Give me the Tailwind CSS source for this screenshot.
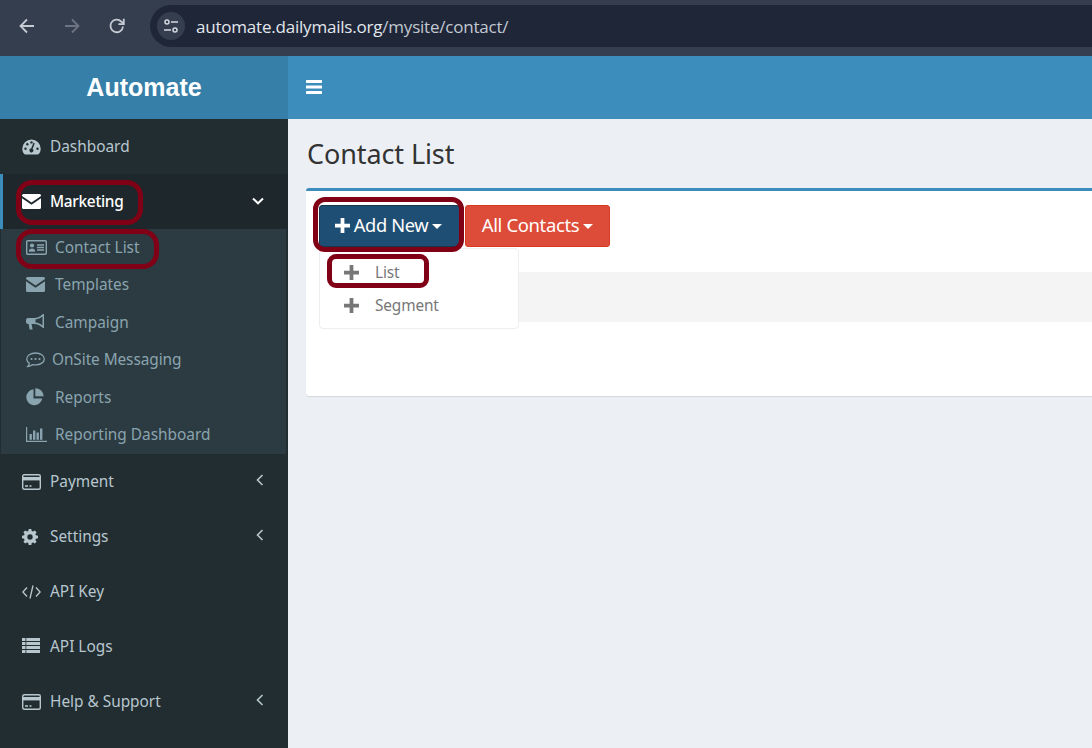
<!DOCTYPE html>
<html><head><meta charset="utf-8"><script src="https://cdn.jsdelivr.net/npm/@tailwindcss/browser@4"></script></head>
<body class="relative w-[1092px] h-[748px] overflow-hidden bg-[#ecf0f5] font-['Noto_Sans',sans-serif]">
<!-- browser bar -->
<div class="h-[56px] bg-[#353e4e] flex items-start pt-[5px]">
  <div class="w-[150px] h-[42px] flex shrink-0 items-center pl-[18px] gap-[27px]">
    <svg class="w-[18px] h-[18px]" viewBox="0 0 18 18" fill="none" stroke="#c5cad3" stroke-width="1.8"><path d="M16 9H2.500M9 2.500 2.500 9 9 15.500"/></svg>
    <svg class="w-[18px] h-[18px]" viewBox="0 0 18 18" fill="none" stroke="#6d7482" stroke-width="1.8"><path d="M2 9h13.500M9 2.500 15.500 9 9 15.500"/></svg>
    <svg class="w-[18px] h-[18px]" viewBox="0 0 18 18" fill="none" stroke="#c5cad3" stroke-width="1.8"><path d="M15 9.500A6.300 6.300 0 1 1 13.200 4.500L15.500 6.500"/><path d="M15.800 1.800v5.400h-5.400" /></svg>
  </div>
  <div class="flex-1 h-[42px] rounded-l-[21px] bg-[#1e2638] flex items-center pl-[7px]">
    <div class="w-[28px] h-[28px] rounded-full bg-[#353e4e] flex items-center justify-center">
      <svg class="w-[16px] h-[16px]" viewBox="0 0 16 16" fill="none" stroke="#d5d9e0" stroke-width="1.5"><circle cx="4" cy="4" r="2"/><path d="M8 4h7M1 12h7"/><circle cx="12" cy="12" r="2"/></svg>
    </div>
    <span class="ml-[11px] mt-[2px] text-[17px] text-[#e3e6ec] font-['Open_Sans',sans-serif] tracking-[-0.21px]">automate.dailymails.org<span class="text-[#c3c8d1]">/mysite/contact/</span></span>
  </div>
</div>
<!-- app header -->
<div class="h-[63px] flex bg-[#3c8dbc]">
  <div class="w-[288px] bg-[#367fa9] flex items-center justify-center text-white font-bold text-[25px] font-['Liberation_Sans',sans-serif]">Automate</div>
  <div class="pl-[18px] pb-[2px] flex items-center">
    <svg class="w-[16px] h-[14px]" viewBox="0 0 16 14" fill="#fff"><rect width="16" height="3" rx=".6"/><rect y="5.500" width="16" height="3" rx=".6"/><rect y="11" width="16" height="3" rx=".6"/></svg>
  </div>
</div>
<div class="flex h-[629px]">
  <!-- sidebar -->
  <aside class="w-[288px] shrink-0 bg-[#222d32] text-[#b8c7ce] text-[15.4px] tracking-[-0.01px]">
    <div class="h-[55px] pl-[22px] flex items-center gap-[9px]">
      <svg class="w-[19px] h-[16px]" viewBox="0 0 19 16" fill="#b8c7ce"><path d="M9.500 0.500A9.200 9.200 0 0 0 .3 9.700c0 2.200.7 4 2 5.300.2.2.5.4.8.4h12.800c.3 0 .6-.2.8-.4 1.300-1.300 2-3.100 2-5.300A9.200 9.200 0 0 0 9.500.5z"/><g fill="#222d32"><circle cx="3.500" cy="9.700" r="1.200"/><circle cx="5.300" cy="5.200" r="1.200"/><circle cx="9.500" cy="3.400" r="1.200"/><circle cx="15.500" cy="9.700" r="1.200"/><path d="M12.800 4.200 10.600 10a1.900 1.900 0 1 1-1.500-.4l2.400-5.900z"/></g></svg>
      <span>Dashboard</span>
    </div>
    <div class="h-[55px] pl-[19px] pr-[24px] flex items-center gap-[9px] bg-[#1e282c] border-l-[3px] border-[#3c8dbc] text-white font-medium tracking-[-0.3px]">
      <svg class="w-[19px] h-[15px] shrink-0" viewBox="0 0 19 15" fill="#fff"><path d="M0 1.500A1.500 1.500 0 0 1 1.500 0h16A1.500 1.500 0 0 1 19 1.500v.6L9.500 8.600 0 2.100z"/><path d="M0 4.200 9.500 10.700 19 4.200v9.300a1.500 1.500 0 0 1-1.500 1.500h-16A1.500 1.500 0 0 1 0 13.500z"/></svg>
      <span class="flex-1">Marketing</span>
      <svg class="w-[12px] h-[8px] mb-[2px]" viewBox="0 0 12 8" fill="none" stroke="#fff" stroke-width="2"><path d="M1 1.500 6 6.300 11 1.500"/></svg>
    </div>
    <div class="h-[225px] ml-px mr-[2px] bg-[#2c3b41] text-[#8aa4af] pl-[25px] flex flex-col">
      <div class="h-[37px] flex items-center gap-[8px]">
        <svg class="w-[21px] h-[15px]" viewBox="0 0 21 15" fill="none"><rect x=".7" y=".7" width="19.600" height="13.600" rx="1" stroke="#8aa4af" stroke-width="1.400"/><circle cx="6" cy="5.500" r="2.100" fill="#8aa4af"/><path d="M2.800 11.800c0-2.300 1.300-3.300 3.200-3.300s3.200 1 3.200 3.300z" fill="#8aa4af"/><path d="M11 5h7M11 7.500h7M11 10h7" stroke="#8aa4af" stroke-width="1.300"/></svg>
        <span>Contact List</span>
      </div>
      <div class="h-[37px] flex items-center gap-[10px]">
        <svg class="w-[19px] h-[15px]" viewBox="0 0 19 15" fill="#8aa4af"><path d="M0 1.500A1.500 1.500 0 0 1 1.500 0h16A1.500 1.500 0 0 1 19 1.500v.6L9.500 8.600 0 2.100z"/><path d="M0 4.200 9.500 10.700 19 4.200v9.300a1.500 1.500 0 0 1-1.500 1.500h-16A1.500 1.500 0 0 1 0 13.500z"/></svg>
        <span>Templates</span>
      </div>
      <div class="h-[38px] flex items-center gap-[10px] pt-[2px]">
        <svg class="w-[19px] h-[16px] -mt-[2px]" viewBox="0 0 19 16" fill="#8aa4af"><path d="M17 0 15.800 1C13.500 3 11 4 8 4H2a2 2 0 0 0-2 2v2a2 2 0 0 0 2 2h.6l1 5.500h3L5.600 10H8c3 0 5.500 1 7.800 3l1.200 1h1V0zM16.500 2.600v8.800C14.500 9.800 12 8.700 9.500 8.500V5.500c2.500-.2 5-1.300 7-2.900z"/></svg>
        <span>Campaign</span>
      </div>
      <div class="h-[37px] flex items-center gap-[7px]">
        <svg class="w-[19px] h-[16px]" viewBox="0 0 19 16" fill="#8aa4af"><path d="M9.500 1C4.500 1 .7 3.700.7 7c0 1.700 1 3.200 2.700 4.300-.2 1-.8 2.200-1.700 3.200 2 0 3.700-.8 5-1.900.9.200 1.800.3 2.800.3 5 0 8.800-2.700 8.800-5.900S14.500 1 9.500 1z" fill="none" stroke="#8aa4af" stroke-width="1.300"/><circle cx="5.500" cy="7" r="1.100"/><circle cx="9.500" cy="7" r="1.100"/><circle cx="13.500" cy="7" r="1.100"/></svg>
        <span class="tracking-[-0.08px]">OnSite Messaging</span>
      </div>
      <div class="h-[38px] flex items-center gap-[11px] pt-[2px]">
        <svg class="w-[18px] h-[18px] -mt-[2px]" viewBox="0 0 18 18" fill="#8aa4af"><path d="M7.500 1.300A8 8 0 1 0 16.200 10.500H7.500z"/><path d="M9.300 .3v8h8.400A8.400 8.400 0 0 0 9.300.3z"/></svg>
        <span>Reports</span>
      </div>
      <div class="h-[37px] flex items-center gap-[8px]">
        <svg class="w-[21px] h-[15px]" viewBox="0 0 21 15" fill="#8aa4af"><path d="M0 0h1.200v13.800H21V15H0z"/><rect x="3.500" y="7" width="2.400" height="5.800"/><rect x="7" y="3.500" width="2.400" height="9.300"/><rect x="10.500" y="5.500" width="2.400" height="7.300"/><rect x="14" y="1.500" width="2.400" height="11.300"/></svg>
        <span>Reporting Dashboard</span>
      </div>
    </div>
    <div class="h-[55px] pl-[22px] pr-[24px] flex items-center gap-[9px]">
      <svg class="w-[19px] h-[16px] shrink-0" viewBox="0 0 19 16" fill="none"><rect x=".7" y=".7" width="17.600" height="14.600" rx="1.500" stroke="#b8c7ce" stroke-width="1.400"/><rect x="1" y="3" width="17" height="3.400" fill="#b8c7ce"/><path d="M3 12h3M7.500 12h2" stroke="#b8c7ce" stroke-width="1.400"/></svg>
      <span class="flex-1">Payment</span>
      <svg class="w-[8px] h-[12px] mb-[3px]" viewBox="0 0 8 12" fill="none" stroke="#b8c7ce" stroke-width="1.600"><path d="M6.500 1 1.500 6l5 5"/></svg>
    </div>
    <div class="h-[55px] pl-[22px] pr-[24px] flex items-center gap-[12px]">
      <svg class="w-[16px] h-[16px] shrink-0" viewBox="0 0 16 16" fill="#b8c7ce"><path fill-rule="evenodd" d="M6.700 0h2.600l.4 2.100 1.300.5 1.800-1.200 1.800 1.800-1.200 1.800.5 1.300 2.100.4v2.600l-2.100.4-.5 1.300 1.200 1.800-1.800 1.800-1.800-1.200-1.300.5-.4 2.100H6.700l-.4-2.100-1.300-.5-1.800 1.200-1.800-1.800 1.200-1.800-.5-1.300L0 9.300V6.700l2.100-.4.5-1.300-1.200-1.800 1.800-1.800 1.800 1.200 1.300-.5zM8 5.300a2.700 2.700 0 1 0 0 5.400 2.700 2.700 0 0 0 0-5.400z"/></svg>
      <span class="flex-1">Settings</span>
      <svg class="w-[8px] h-[12px] mb-[3px]" viewBox="0 0 8 12" fill="none" stroke="#b8c7ce" stroke-width="1.600"><path d="M6.500 1 1.500 6l5 5"/></svg>
    </div>
    <div class="h-[55px] pl-[22px] flex items-center gap-[9px]">
      <svg class="w-[19px] h-[14px] shrink-0" viewBox="0 0 19 14" fill="none" stroke="#b8c7ce" stroke-width="1.300"><path d="M5 2.500.9 7 5 11.500M14 2.500 18.100 7 14 11.500M11 .5 8 13.500"/></svg>
      <span>API Key</span>
    </div>
    <div class="h-[55px] pl-[22px] flex items-center gap-[10px]">
      <svg class="w-[18px] h-[15px] shrink-0 mb-[2px]" viewBox="0 0 18 15" fill="#b8c7ce"><path d="M0 0h3.500v3H0zM4.300 0H18v3H4.300zM0 4h3.500v3H0zM4.300 4H18v3H4.300zM0 8h3.500v3H0zM4.300 8H18v3H4.300zM0 12h3.500v3H0zM4.300 12H18v3H4.300z"/></svg>
      <span>API Logs</span>
    </div>
    <div class="h-[55px] pl-[22px] pr-[24px] flex items-center gap-[9px]">
      <svg class="w-[19px] h-[16px] shrink-0" viewBox="0 0 19 16" fill="none"><rect x=".7" y=".7" width="17.600" height="14.600" rx="1.500" stroke="#b8c7ce" stroke-width="1.400"/><rect x="1" y="3" width="17" height="3.400" fill="#b8c7ce"/><path d="M3 12h3M7.500 12h2" stroke="#b8c7ce" stroke-width="1.400"/></svg>
      <span class="flex-1">Help &amp; Support</span>
      <svg class="w-[8px] h-[12px] mb-[3px]" viewBox="0 0 8 12" fill="none" stroke="#b8c7ce" stroke-width="1.600"><path d="M6.500 1 1.500 6l5 5"/></svg>
    </div>
  </aside>
  <!-- main -->
  <main class="flex-1 min-w-0 pl-[18px] text-[#333]">
    <h1 class="h-[69px] pt-[15px] text-[27px] leading-[40px] text-[#333] tracking-[-0.1px] pl-px">Contact List</h1>
    <div class="relative h-[208px] w-[800px] bg-white border-t-[3px] border-[#3c8dbc] rounded-[3px] shadow-[0_1px_1px_rgba(0,0,0,0.1)]">
      <div class="flex gap-[5px] pl-[13px] pt-[14px]">
        <div class="h-[42px] w-[141px] bg-[#1f4e74] border border-[#17384f] rounded-[3px] text-white text-[18.3px] tracking-[-0.4px] flex items-center justify-center gap-[4px] pb-[3px] pr-[2px]">
          <svg class="w-[15px] h-[15px] mt-[2px]" viewBox="0 0 16 16" fill="#fff"><path d="M6 0h4v6h6v4h-6v6H6v-6H0V6h6z"/></svg>
          <span>Add New</span>
          <span class="mt-[3px] w-0 h-0 border-x-[5px] border-x-transparent border-t-[5px] border-t-white"></span>
        </div>
        <div class="h-[42px] w-[145px] bg-[#dd4b39] border border-[#d73925] rounded-[3px] text-white text-[18.5px] tracking-[-0.38px] flex items-center justify-center gap-[4px] pb-[3px]">
          <span>All Contacts</span>
          <span class="mt-[3px] w-0 h-0 border-x-[5px] border-x-transparent border-t-[5px] border-t-white"></span>
        </div>
      </div>
      <div class="mt-[25px] ml-[13px] h-[50px] bg-[#f4f4f4]"></div>
      <div class="absolute left-[13px] top-[57px] w-[200px] h-[81px] bg-white border border-[#eeeeee] rounded-[4px] text-[#777] text-[15.4px] tracking-[-0.15px] flex flex-col justify-center pl-[24px] pt-[2px]">
        <div class="h-[33px] flex items-center gap-[16px]">
          <svg class="w-[15px] h-[15px] mb-[2px]" viewBox="0 0 16 16" fill="#777"><path d="M6 0h4v6h6v4h-6v6H6v-6H0V6h6z"/></svg><span>List</span>
        </div>
        <div class="h-[33px] flex items-center gap-[16px]">
          <svg class="w-[15px] h-[15px] mb-[2px]" viewBox="0 0 16 16" fill="#777"><path d="M6 0h4v6h6v4h-6v6H6v-6H0V6h6z"/></svg><span>Segment</span>
        </div>
      </div>
    </div>
  </main>
</div>
<!-- annotation rings -->
<div class="absolute left-[16px] top-[180px] w-[127px] h-[45px] border-[5px] border-[#800016] rounded-[16px]"></div>
<div class="absolute left-[16px] top-[229px] w-[143px] h-[40px] border-[5px] border-[#800016] rounded-[16px]"></div>
<div class="absolute left-[313px] top-[197px] w-[151px] h-[55px] border-[5px] border-[#800016] rounded-[12px]"></div>
<div class="absolute left-[327px] top-[254px] w-[102px] h-[34px] border-[5px] border-[#800016] rounded-[9px]"></div>
</body></html>
